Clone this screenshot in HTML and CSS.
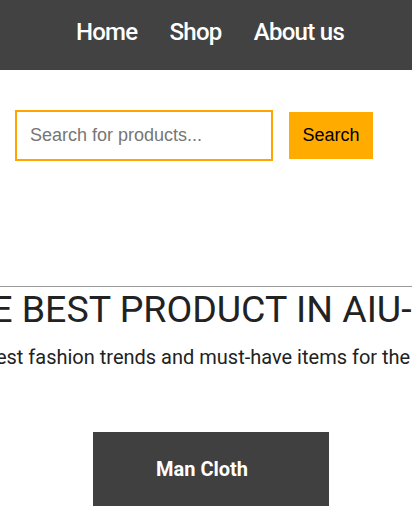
FILE: index.html
```html
<!DOCTYPE html>
<html lang="en">
<head>
<meta charset="utf-8">
<title>AIU Shop</title>
<link rel="stylesheet" href="styles.css">
</head>
<body>
<header class="topbar">
  <nav class="nav">
    <a class="nav-link" href="#">Home</a>
    <a class="nav-link" href="#">Shop</a>
    <a class="nav-link" href="#">About us</a>
  </nav>
</header>
<section class="search">
  <input class="search-input" type="text" placeholder="Search for products...">
  <button class="search-btn" type="button">Search</button>
</section>
<section class="hero">
  <div class="hero-line hero-line-title"><h1 class="hero-title">THE BEST PRODUCT IN AIU-SHOP</h1></div>
  <div class="hero-line"><p class="hero-sub">Find the latest fashion trends and must-have items for the whole year.</p></div>
</section>
<section class="cats">
  <a class="cat" href="#">Man Cloth</a>
</section>
</body>
</html>
```

FILE: styles.css
```css
html, body {
  margin: 0;
  padding: 0;
  background: #fff;
  font-family: Roboto, "Liberation Sans", Arial, sans-serif;
  overflow-x: hidden;
}
.topbar {
  box-sizing: border-box;
  height: 70px;
  padding-top: 18px;
  background: #424242;
  display: flex;
  align-items: flex-start;
  justify-content: center;
}
.nav {
  display: flex;
  gap: 32px;
  margin-left: 8px;
}
.nav-link {
  color: #fff;
  text-decoration: none;
  font-size: 24px;
  font-weight: 500;
  letter-spacing: -0.7px;
}
.search {
  display: flex;
  align-items: center;
  gap: 16px;
  padding: 40px 0 0 15px;
}
.search-input {
  box-sizing: border-box;
  width: 258px;
  height: 51px;
  border: 2px solid #ffa500;
  padding: 0 13px;
  margin: 0;
  font-family: Arial, "Liberation Sans", sans-serif;
  font-size: 18px;
  color: #333;
  outline: none;
}
.search-input::placeholder {
  color: #767676;
}
.search-btn {
  box-sizing: border-box;
  width: 84px;
  height: 47px;
  border: none;
  margin: 0;
  background: #ffab00;
  color: #000;
  font-family: Arial, "Liberation Sans", sans-serif;
  font-size: 18px;
  padding: 0;
}
.hero {
  margin-top: 125px;
  border-top: 1px solid #999;
  overflow: hidden;
}
.hero-line {
  display: flex;
  justify-content: center;
}
.hero-line-title {
  padding-left: 40px;
}
.hero-title {
  margin: 0;
  white-space: nowrap;
  font-size: 37.5px;
  font-weight: 400;
  color: #222;
  flex: none;
}
.hero-sub {
  margin: 14px 0 0;
  white-space: nowrap;
  font-size: 20px;
  color: #222;
  flex: none;
}
.cats {
  display: flex;
  padding: 63px 0 0 93px;
}
.cat {
  box-sizing: border-box;
  width: 236px;
  height: 74px;
  background: #404040;
  color: #fff;
  text-decoration: none;
  font-size: 20px;
  font-weight: 700;
  display: flex;
  align-items: center;
  padding-left: 63px;
}
```
